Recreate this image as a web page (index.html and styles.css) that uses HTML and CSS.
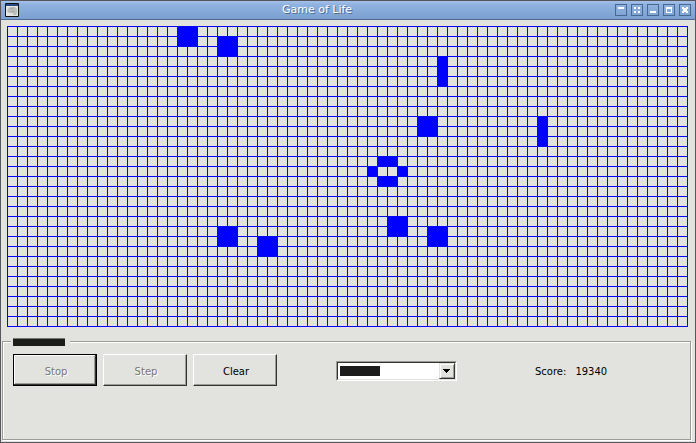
FILE: index.html
```
<!DOCTYPE html>
<html lang="en">
<head>
<meta charset="utf-8">
<title>Game of Life</title>
<link rel="stylesheet" href="styles.css">
</head>
<body>
<div class="window">
  <header class="titlebar">
    <svg class="app-icon" width="14" height="14" viewBox="0 0 14 14" aria-hidden="true">
      <rect width="14" height="14" rx="1" fill="#111"/>
      <rect x="1" y="1" width="12" height="2" fill="#244a86"/>
      <rect x="1" y="3" width="12" height="10" fill="#e4e4e2"/>
      <path d="M3 6l2-2h5l2 2v4l-1 2H9l-2-2H4L2 8z" fill="#bcbcba"/>
      <path d="M5 5h3v1H5zM6 8h3v1H6z" fill="#a8a8a6"/>
    </svg>
    <h1 class="title">Game of Life</h1>
    <div class="window-buttons">
      <button class="win-btn" type="button" aria-label="Shade"><svg width="12" height="12" viewBox="0 0 12 12" shape-rendering="crispEdges"><path d="M3 3h6v2H3z"/></svg></button>
      <button class="win-btn" type="button" aria-label="Stick"><svg width="12" height="12" viewBox="0 0 12 12" shape-rendering="crispEdges"><path d="M3 3h2v2H3zM7 3h2v2H7zM3 7h2v2H3zM7 7h2v2H7z"/></svg></button>
      <button class="win-btn" type="button" aria-label="Minimize"><svg width="12" height="12" viewBox="0 0 12 12" shape-rendering="crispEdges"><path d="M3 7h6v2H3z"/></svg></button>
      <button class="win-btn" type="button" aria-label="Maximize"><svg width="12" height="12" viewBox="0 0 12 12" shape-rendering="crispEdges"><path fill-rule="evenodd" d="M3 3h6v6H3zM4 5v3h4V5z"/></svg></button>
      <button class="win-btn" type="button" aria-label="Close"><svg width="12" height="12" viewBox="0 0 12 12" shape-rendering="crispEdges"><path d="M3 3h2v1h2V3h2v2H8v2h1v2H7V8H5v1H3V7h1V5H3z"/></svg></button>
    </div>
  </header>
  <main class="content">
    <svg class="board" role="img" aria-label="Board" shape-rendering="crispEdges">
      <defs>
        <pattern id="grid" width="10" height="10" patternUnits="userSpaceOnUse">
          <path d="M0 0h10v1H1v9H0z" fill="#00f"/>
        </pattern>
      </defs>
      <rect width="100%" height="100%" fill="url(#grid)"/>
      <g fill="#00f">
        <rect x="170" y="0" width="21" height="21"/>
        <rect x="210" y="10" width="21" height="21"/>
        <rect x="430" y="30" width="11" height="31"/>
        <rect x="410" y="90" width="21" height="21"/>
        <rect x="530" y="90" width="11" height="31"/>
        <rect x="370" y="130" width="21" height="11"/>
        <rect x="360" y="140" width="11" height="11"/>
        <rect x="390" y="140" width="11" height="11"/>
        <rect x="370" y="150" width="21" height="11"/>
        <rect x="380" y="190" width="21" height="21"/>
        <rect x="420" y="200" width="21" height="21"/>
        <rect x="210" y="200" width="21" height="21"/>
        <rect x="250" y="210" width="21" height="21"/>
      </g>
    </svg>
    <section class="group">
      <div class="legend"><span class="legend-bar"></span></div>
      <div class="controls">
        <div class="buttons">
          <button class="btn btn-default" type="button" disabled>Stop</button>
          <button class="btn" type="button" disabled>Step</button>
          <button class="btn" type="button">Clear</button>
        </div>
        <div class="combo">
          <select class="combo-select" aria-label="Choice"><option></option></select>
          <span class="combo-value"></span>
          <span class="combo-arrow"><svg width="8" height="4" viewBox="0 0 8 4" shape-rendering="crispEdges"><path d="M0 0h7v1H6v1H5v1H4v1H3V3H2V2H1V1H0z"/></svg></span>
        </div>
        <div class="score"><span>Score:</span><output>19340</output></div>
      </div>
    </section>
  </main>
</div>
</body>
</html>
```
FILE: styles.css
```
* {
  box-sizing: border-box;
}

body {
  margin: 0;
  font-family: "DejaVu Sans", sans-serif;
  font-size: 10px;
  color: #000;
}

.window {
  display: flex;
  flex-direction: column;
  min-height: 100vh;
  border: 1px solid #56565c;
  background: #e2e2de;
}

.titlebar {
  display: flex;
  align-items: center;
  height: 19px;
  padding: 0 4px;
  border-bottom: 1px solid #4c6a94;
  background: linear-gradient(#a4c0e8, #8fb2e0 20%, #7b9fd0);
}

.app-icon {
  flex: none;
}

.title {
  flex: 1;
  margin: 0;
  text-align: center;
  font-size: 11px;
  font-weight: normal;
  line-height: 16px;
  color: #fff;
  text-shadow: 1px 1px 0 #4c6a94;
}

.window-buttons {
  display: flex;
  gap: 4px;
}

.win-btn {
  display: block;
  width: 12px;
  height: 12px;
  padding: 0;
  border: 0;
  outline: 1px solid #48698f;
  outline-offset: -1px;
  background: transparent;
}

.win-btn svg {
  display: block;
  fill: #fff;
}

.content {
  display: flex;
  flex: 1;
  flex-direction: column;
  padding: 6px 4px 2px 1px;
}

.board {
  display: block;
  flex: none;
  width: calc(100% - 8px);
  height: 301px;
  margin: 0 3px 14px 5px;
}

.group {
  flex: 1;
  border: 1px solid #9c9c96;
  box-shadow: 1px 1px 0 #fff, inset 1px 1px 0 #fff;
  padding: 0 10px;
}

.legend {
  display: flex;
  align-items: center;
  width: 59px;
  height: 12px;
  margin: -6px 0 6px -2px;
  padding-left: 2px;
  background: #e2e2de;
}

.legend-bar {
  width: 52px;
  height: 8px;
  border-top: 1px solid #777772;
  background: #1c1e1a;
}

.controls {
  display: grid;
  grid-template-columns: 323px 199px 1fr;
  align-items: center;
}

.buttons {
  display: flex;
  gap: 6px;
}

.btn {
  width: 84px;
  height: 32px;
  padding: 2px 0 0 2px;
  border: 1px solid;
  border-color: #fff #33332f #33332f #fff;
  background: #e2e2de;
  box-shadow: inset -1px -1px 0 #9c9c96;
  font: inherit;
  color: #000;
}

.btn:disabled {
  color: #777772;
  text-shadow: 1px 1px 0 #fff;
}

.btn-default {
  border-color: #000;
  box-shadow: inset -1px -1px 0 #33332f, inset 1px 1px 0 #fff, inset -2px -2px 0 #9c9c96;
}

.combo {
  position: relative;
  width: 121px;
  height: 20px;
  margin-top: 2px;
  border: 1px solid;
  border-color: #9c9c96 #fff #fff #9c9c96;
}

.combo-select {
  appearance: none;
  display: block;
  width: 100%;
  height: 100%;
  border: 1px solid;
  border-color: #33332f #e2e2de #e2e2de #33332f;
  border-radius: 0;
  background: #fff;
  font: inherit;
}

.combo-value {
  position: absolute;
  top: 4px;
  left: 3px;
  width: 40px;
  height: 10px;
  background: #1c1c1c;
  pointer-events: none;
}

.combo-arrow {
  position: absolute;
  top: 1px;
  right: 1px;
  display: flex;
  align-items: center;
  justify-content: center;
  width: 16px;
  height: 16px;
  border: 1px solid;
  border-color: #e2e2de #33332f #33332f #e2e2de;
  background: #e2e2de;
  box-shadow: inset 1px 1px 0 #fff, inset -1px -1px 0 #9c9c96;
  pointer-events: none;
}

.score {
  display: flex;
  gap: 9px;
  padding-top: 2px;
}
```
